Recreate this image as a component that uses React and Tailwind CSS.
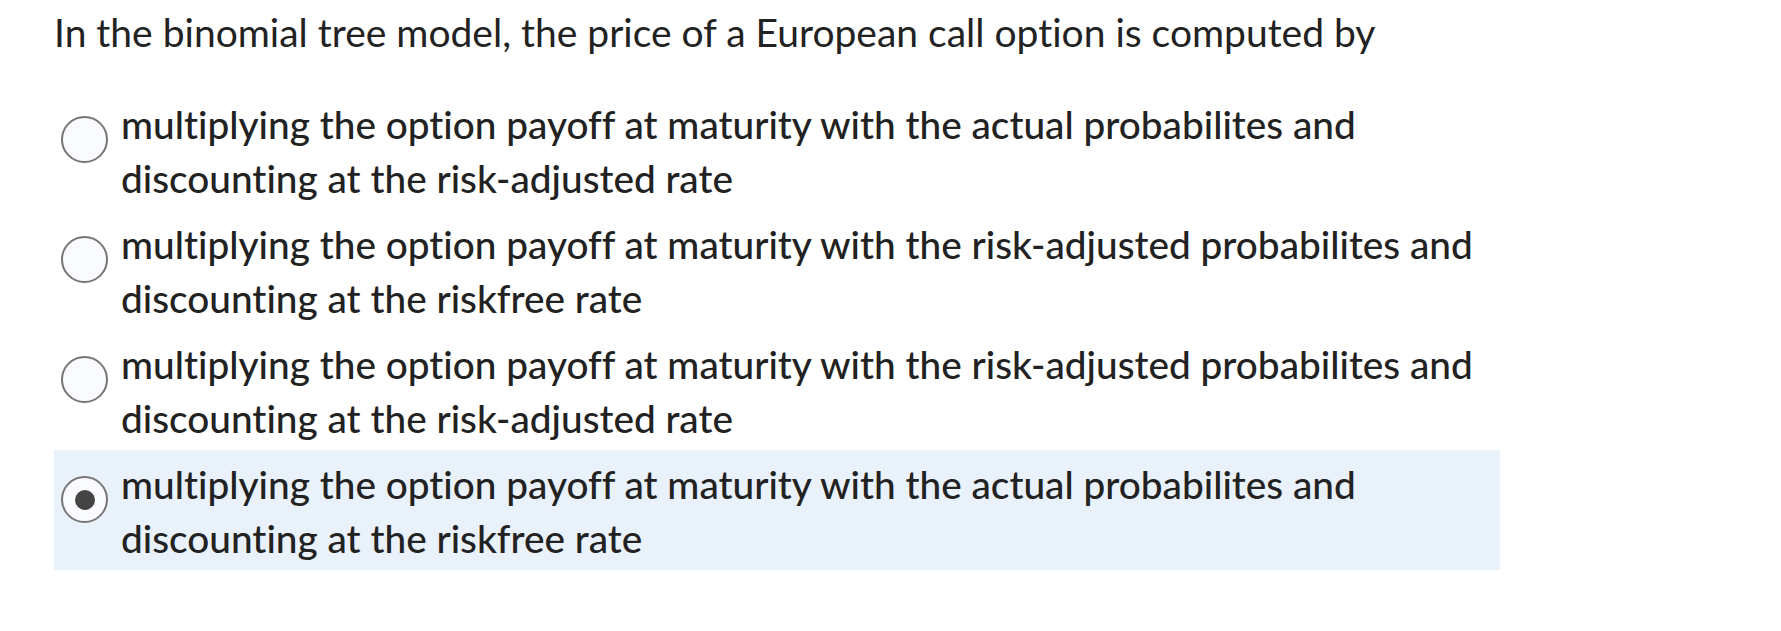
import { useState } from "react";

const options = [
    "multiplying the option payoff at maturity with the actual probabilites and discounting at the risk-adjusted rate",
    "multiplying the option payoff at maturity with the risk-adjusted probabilites and discounting at the riskfree rate",
    "multiplying the option payoff at maturity with the risk-adjusted probabilites and discounting at the risk-adjusted rate",
    "multiplying the option payoff at maturity with the actual probabilites and discounting at the riskfree rate",
];

export default function App() {
    const [selected, setSelected] = useState(3);

    return (
        <div className="min-h-screen bg-white pl-[54px] pt-[5px] text-[#222] font-['Lato','Liberation_Sans',sans-serif] [font-variant-ligatures:none]">
            <p className="text-[39px] leading-[54px]">
                In the binomial tree model, the price of a European call option is computed by
            </p>
            <div className="mt-[31px] w-[1446px] flex flex-col">
                {options.map((text, i) => {
                    const isSel = selected === i;
                    return (
                        <label
                            key={i}
                            onClick={() => setSelected(i)}
                            className={`flex items-start gap-[13px] pl-[7px] pt-[7px] pb-[5px] h-[120px] cursor-pointer ${isSel ? "bg-[#e9f1fb]" : ""}`}
                        >
                            <span className="mt-[19px] shrink-0 w-[47px] h-[47px] rounded-full border-[2px] border-[#767676] bg-[#f9fbff] flex items-center justify-center">
                                {isSel && <span className="w-[20px] h-[20px] rounded-full bg-[#444]" />}
                            </span>
                            <span className="text-[38.75px] leading-[54px] font-medium">{text}</span>
                        </label>
                    );
                })}
            </div>
        </div>
    );
}
